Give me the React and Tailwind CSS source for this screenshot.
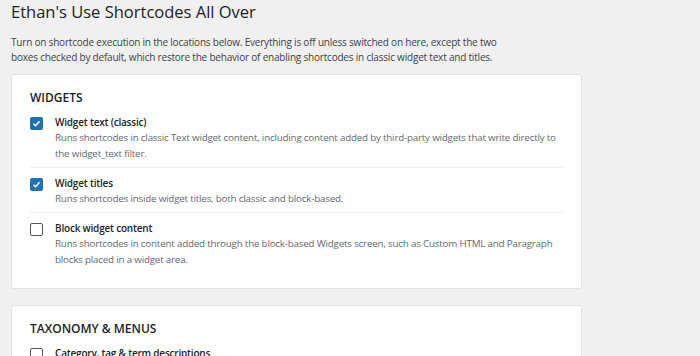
const options = [
  {
    label: 'Widget text (classic)',
    desc: [
      'Runs shortcodes in classic Text widget content, including content added by third-party widgets that write directly to',
      'the widget_text filter.',
    ],
    checked: true,
  },
  {
    label: 'Widget titles',
    desc: ['Runs shortcodes inside widget titles, both classic and block-based.'],
    checked: true,
  },
  {
    label: 'Block widget content',
    desc: [
      'Runs shortcodes in content added through the block-based Widgets screen, such as Custom HTML and Paragraph',
      'blocks placed in a widget area.',
    ],
    checked: false,
  },
];

function Checkbox({ checked }) {
  if (checked) {
    return (
      <span className="mt-[2px] flex h-[13px] w-[13px] flex-shrink-0 items-center justify-center rounded-[2px] bg-[#2271b1]">
        <svg viewBox="0 0 12 12" className="h-[9px] w-[9px]">
          <path d="M2 6.3 L4.8 9 L10 3" fill="none" stroke="#fff" strokeWidth="2" />
        </svg>
      </span>
    );
  }
  return <span className="mt-[2px] h-[13px] w-[13px] flex-shrink-0 rounded-[2px] border border-[#50575e] bg-white" />;
}

function Option({ item, last }) {
  return (
    <div className={`flex gap-[12px] pt-[8px] pb-[5px] ${last ? '' : 'border-b border-[#f0f0f1]'}`}>
      <Checkbox checked={item.checked} />
      <div className="min-w-0">
        <div className="text-[10px] font-semibold leading-[15px] tracking-[-0.2px] text-[#1d2327]">{item.label}</div>
        {item.desc.map((line) => (
          <div key={line} className="whitespace-nowrap text-[9.8px] leading-[16px] tracking-[-0.2px] text-[#646970]">
            {line}
          </div>
        ))}
      </div>
    </div>
  );
}

export default function App() {
  return (
    <div className="min-h-[356px] bg-[#f0f0f1] px-[11px] font-['Open_Sans',sans-serif]">
      <h1 className="text-[16.5px] leading-[24px] text-[#1d2327]">Ethan's Use Shortcodes All Over</h1>
      <p className="mt-[11px] whitespace-nowrap text-[10px] leading-[15px] tracking-[-0.2px] text-[#3c434a]">
        Turn on shortcode execution in the locations below. Everything is off unless switched on here, except the two
        <br />
        boxes checked by default, which restore the behavior of enabling shortcodes in classic widget text and titles.
      </p>

      <section className="mt-[9px] w-[571px] rounded-[3px] border border-[#e2e2e4] bg-white px-[18px] pb-[15px] pt-[15px]">
        <h2 className="mb-[1px] text-[12px] font-semibold uppercase leading-[16px] text-[#1d2327]">Widgets</h2>
        {options.map((item, i) => (
          <Option key={item.label} item={item} last={i === options.length - 1} />
        ))}
      </section>

      <section className="mt-[16px] w-[571px] rounded-[3px] border border-[#e2e2e4] bg-white px-[18px] pt-[15px]">
        <h2 className="mb-[1px] text-[12px] font-semibold uppercase leading-[16px] text-[#1d2327]">Taxonomy &amp; Menus</h2>
        <div className="flex gap-[12px] pt-[8px] pb-[5px]">
          <Checkbox checked={false} />
          <div className="text-[10px] font-semibold leading-[15px] tracking-[-0.2px] text-[#1d2327]">Category, tag &amp; term descriptions</div>
        </div>
      </section>
    </div>
  );
}
